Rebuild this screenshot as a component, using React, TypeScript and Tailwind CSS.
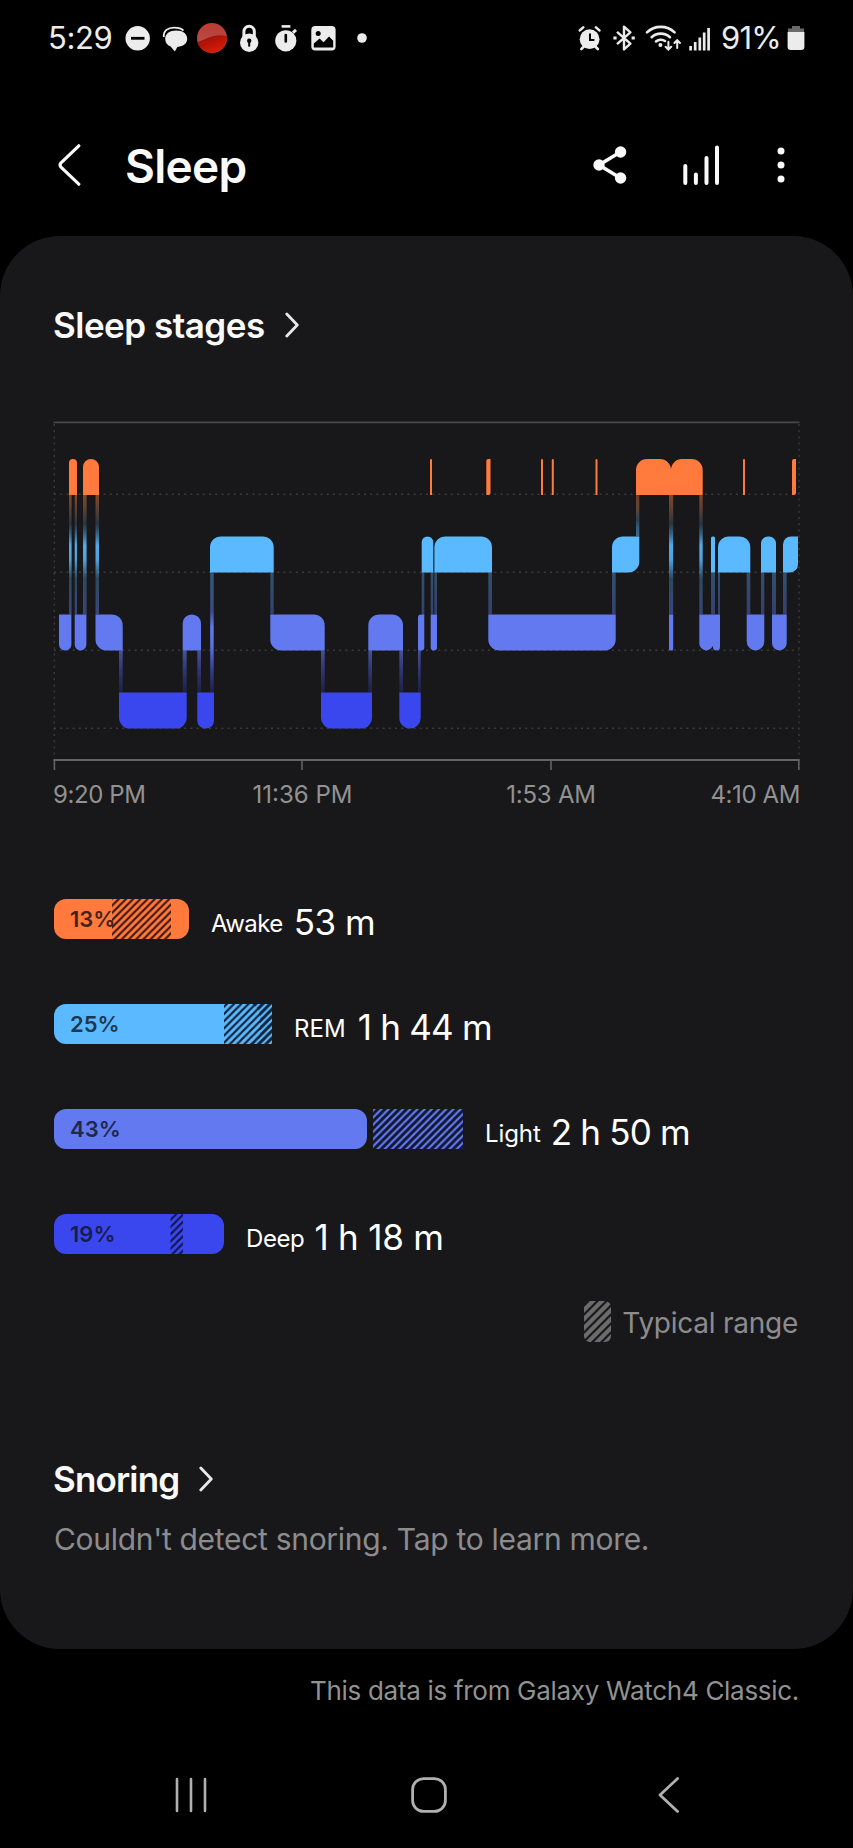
import type { ReactNode } from "react";

type Corners = [number, number, number, number];

interface Segment {
  x0: number;
  x1: number;
  r: Corners; // tl, tr, br, bl
}

const COLORS = {
  awake: "#ff7a3c",
  rem: "#5bb9ff",
  light: "#6379f0",
  deep: "#3a47ee",
};

const SEG_HEIGHT = 36;

const top = (x0: number, x1: number, r: number): Segment => ({ x0, x1, r: [r, r, 0, 0] });
const bottom = (x0: number, x1: number, r: number): Segment => ({ x0, x1, r: [0, 0, r, r] });
const rise = (x0: number, x1: number, r: number): Segment => ({ x0, x1, r: [r, 0, r, 0] });
const fall = (x0: number, x1: number, r: number): Segment => ({ x0, x1, r: [0, r, 0, r] });

const stages: { key: keyof typeof COLORS; y: number; segments: Segment[] }[] = [
  {
    key: "awake",
    y: 459,
    segments: [
      top(69, 77, 4),
      top(83, 99, 8),
      top(430, 432, 1),
      rise(486.3, 490.5, 2),
      top(541, 543, 1),
      top(551.8, 553.8, 1),
      top(595.5, 597.5, 1),
      top(636, 671, 11),
      top(671, 702.7, 11),
      top(743, 745, 1),
      rise(792, 796, 2),
    ],
  },
  {
    key: "rem",
    y: 536.4,
    segments: [
      top(210, 273.7, 11),
      top(421.7, 433.3, 5.8),
      top(434.4, 492, 11),
      rise(612, 639.3, 11),
      top(711, 715, 1.5),
      top(718, 750.3, 11),
      top(761, 776, 7),
      rise(783, 798, 8),
    ],
  },
  {
    key: "light",
    y: 614.4,
    segments: [
      bottom(59, 71.4, 6),
      bottom(74.7, 86.4, 5.8),
      fall(95.5, 122.7, 11),
      top(182.7, 201, 9),
      fall(270.3, 324.7, 11),
      top(368.3, 403, 11),
      rise(418, 424.3, 3),
      bottom(430.7, 437, 3),
      bottom(488.3, 615.7, 11),
      bottom(669, 673.2, 1.5),
      bottom(699.3, 713.3, 7),
      bottom(712.9, 720, 3.5),
      bottom(746.7, 764.3, 8.8),
      bottom(772, 786.7, 7.3),
    ],
  },
  {
    key: "deep",
    y: 692.6,
    segments: [
      bottom(119, 186.7, 11),
      bottom(197.3, 214, 8),
      bottom(321, 372, 11),
      bottom(399.3, 420.7, 10.6),
    ],
  },
];

// vertical links between two stages: [x, width]
const links: { fill: string; y0: number; y1: number; at: [number, number][] }[] = [
  {
    fill: "url(#awake-light)",
    y0: 495,
    y1: 614.4,
    at: [[69, 2.6], [74.7, 2.3], [83, 3.6], [95.5, 3.5], [669, 4.2], [699.3, 3.4]],
  },
  { fill: "url(#awake-rem)", y0: 495, y1: 536.4, at: [[636, 3.3]] },
  {
    fill: "url(#rem-light)",
    y0: 572.4,
    y1: 614.4,
    at: [
      [270.3, 3.4], [421.7, 2.6], [430.7, 2.6], [434.4, 2.6], [488.3, 3.7], [612, 3.7],
      [711, 4], [718, 2], [746.7, 3.6], [761, 3.3], [772, 4], [783, 3.7],
    ],
  },
  { fill: "url(#rem-deep)", y0: 572.4, y1: 692.6, at: [[210.2, 3.5]] },
  {
    fill: "url(#light-deep)",
    y0: 650.4,
    y1: 692.6,
    at: [[119, 3.7], [182.7, 4], [197.3, 3.7], [321, 3.7], [368.3, 3.7], [399.3, 3.7], [418, 2.7]],
  },
];

function segmentPath({ x0, x1, r }: Segment, y: number) {
  const [tl, tr, br, bl] = r;
  const b = y + SEG_HEIGHT;
  return `M${x0 + tl} ${y}H${x1 - tr}A${tr} ${tr} 0 0 1 ${x1} ${y + tr}V${b - br}A${br} ${br} 0 0 1 ${x1 - br} ${b}H${x0 + bl}A${bl} ${bl} 0 0 1 ${x0} ${b - bl}V${y + tl}A${tl} ${tl} 0 0 1 ${x0 + tl} ${y}Z`;
}

function StageChart() {
  return (
    <svg viewBox="54 412 745 366" className="mt-[67px] h-[366px] w-[745px] overflow-visible">
      <defs>
        <linearGradient id="awake-light" x1="0" y1="0" x2="0" y2="1">
          <stop offset="0" stopColor={COLORS.awake} stopOpacity="0.45" />
          <stop offset="0.24" stopColor="#2c4a5c" stopOpacity="0.6" />
          <stop offset="0.42" stopColor={COLORS.rem} stopOpacity="0.9" />
          <stop offset="0.54" stopColor={COLORS.rem} stopOpacity="0.85" />
          <stop offset="0.7" stopColor={COLORS.rem} stopOpacity="0.3" />
          <stop offset="1" stopColor={COLORS.light} stopOpacity="0.45" />
        </linearGradient>
        <linearGradient id="awake-rem" x1="0" y1="0" x2="0" y2="1">
          <stop offset="0" stopColor={COLORS.awake} stopOpacity="0.35" />
          <stop offset="0.6" stopColor="#2c4a5c" stopOpacity="0.8" />
          <stop offset="1" stopColor={COLORS.rem} stopOpacity="0.5" />
        </linearGradient>
        <linearGradient id="rem-light" x1="0" y1="0" x2="0" y2="1">
          <stop offset="0" stopColor={COLORS.rem} stopOpacity="0.35" />
          <stop offset="1" stopColor={COLORS.light} stopOpacity="0.4" />
        </linearGradient>
        <linearGradient id="rem-deep" x1="0" y1="0" x2="0" y2="1">
          <stop offset="0" stopColor={COLORS.rem} stopOpacity="0.4" />
          <stop offset="0.32" stopColor={COLORS.light} stopOpacity="0.5" />
          <stop offset="0.46" stopColor={COLORS.light} />
          <stop offset="0.62" stopColor={COLORS.light} stopOpacity="0.9" />
          <stop offset="1" stopColor={COLORS.deep} stopOpacity="0.2" />
        </linearGradient>
        <linearGradient id="light-deep" x1="0" y1="0" x2="0" y2="1">
          <stop offset="0" stopColor={COLORS.light} stopOpacity="0.6" />
          <stop offset="1" stopColor={COLORS.deep} stopOpacity="0.2" />
        </linearGradient>
      </defs>

      {/* grid */}
      <g stroke="#3b3b3d" strokeWidth="1.4" strokeDasharray="2 4.2" fill="none">
        {[494.3, 572.3, 650.3, 728.3].map((y) => (
          <path key={y} d={`M54 ${y}H799`} />
        ))}
        <path d="M54.3 424V760M799 424V760" />
      </g>
      <path d="M53.5 422.3H799.5" stroke="#464648" strokeWidth="1.8" />
      <path d="M53.5 760H799.5" stroke="#636365" strokeWidth="1.9" />
      <path d="M54.4 760V770M302 760V770M551 760V770M798.8 760V770" stroke="#636365" strokeWidth="1.6" />

      {links.map((l) =>
        l.at.map(([x, w]) => (
          <rect key={`${l.fill}-${x}`} x={x} y={l.y0} width={w} height={l.y1 - l.y0} fill={l.fill} />
        ))
      )}
      {stages.map((s) => (
        <path key={s.key} fill={COLORS[s.key]} d={s.segments.map((seg) => segmentPath(seg, s.y)).join("")} />
      ))}
    </svg>
  );
}

interface StageRow {
  id: string;
  label: string;
  time: string;
  percent: string;
  bar: number;
  range: [number, number];
  color: string;
  dark: string;
  text: string;
  labelClass: string;
  timeClass: string;
}

const rows: StageRow[] = [
  { id: "awake", label: "Awake", time: "53 m", percent: "13%", bar: 135, range: [58, 117], color: "#ff7a3c", dark: "#43190f", text: "text-[#43231a]", labelClass: "tracking-[-0.6px]", timeClass: "ml-[11px] tracking-[-0.5px]" },
  { id: "rem", label: "REM", time: "1 h 44 m", percent: "25%", bar: 206, range: [170, 218], color: "#5bb9ff", dark: "#0f2338", text: "text-[#1d3850]", labelClass: "tracking-[0.1px]", timeClass: "ml-[12px] tracking-[-0.8px]" },
  { id: "light", label: "Light", time: "2 h 50 m", percent: "43%", bar: 313, range: [319, 409], color: "#6379f0", dark: "#10172f", text: "text-[#20294b]", labelClass: "tracking-[-0.1px]", timeClass: "ml-[10px] tracking-[-0.8px]" },
  { id: "deep", label: "Deep", time: "1 h 18 m", percent: "19%", bar: 170, range: [116.5, 129], color: "#3a47ee", dark: "#121650", text: "text-[#181c4e]", labelClass: "tracking-[-0.4px]", timeClass: "ml-[10px] tracking-[-0.2px]" },
];

const HATCH = "M-1.8 1.8L1.8 -1.8M-1.8 9L9 -1.8M5.4 9L9 5.4";

function StageBar({ row }: { row: StageRow }) {
  const [from, to] = row.range;
  const width = Math.max(row.bar, to);
  return (
    <div className="flex h-10 items-center">
      <div className="relative h-10 shrink-0" style={{ width }}>
        <svg className="h-full w-full" viewBox={`0 0 ${width} 40`}>
          <defs>
            <pattern id={`hatch-${row.id}`} width="7.2" height="7.2" patternUnits="userSpaceOnUse">
              <path d={HATCH} stroke={row.dark} strokeWidth="2.1" />
            </pattern>
            {/* inverse hatch for the part of the range past the bar */}
            <pattern id={`range-${row.id}`} width="7.2" height="7.2" patternUnits="userSpaceOnUse">
              <rect width="7.2" height="7.2" fill={row.color} />
              <path d={HATCH} stroke={row.dark} strokeWidth="3" />
            </pattern>
          </defs>
          {to > row.bar && (
            <rect x={from} width={to - from} height="40" fill={`url(#range-${row.id})`} />
          )}
          <rect width={row.bar} height="40" rx="12" fill={row.color} />
          {from < row.bar && (
            <rect x={from} width={Math.min(to, row.bar) - from} height="40" fill={`url(#hatch-${row.id})`} />
          )}
        </svg>
        <span className={`absolute top-0 left-4 text-[22px] leading-10 font-semibold ${row.text}`}>
          {row.percent}
        </span>
      </div>
      <div className="ml-[22px] flex items-baseline whitespace-nowrap text-white">
        <span className={`text-[24px] ${row.labelClass}`}>{row.label}</span>
        <span className={`relative top-[3px] text-[35px] ${row.timeClass}`}>{row.time}</span>
      </div>
    </div>
  );
}

function Chevron() {
  return (
    <svg viewBox="0 0 14 26" className="h-[26px] w-[14px]" fill="none" stroke="#e8e8e8" strokeWidth="2.8" strokeLinecap="round" strokeLinejoin="round">
      <path d="M1.8 2L12.3 13L1.8 24" />
    </svg>
  );
}

function SectionTitle({ children, className = "tracking-[-0.5px]" }: { children: ReactNode; className?: string }) {
  return (
    <div className="-ml-px flex h-10 items-center gap-5">
      <h2 className={`text-[35px] leading-10 font-semibold text-[#fafafa] ${className}`}>{children}</h2>
      <Chevron />
    </div>
  );
}

function StatusBar() {
  return (
    <div className="flex h-[76px] items-center justify-between pr-[48px] pl-[48px] text-[#ececec]">
      <div className="flex items-center">
        <span className="w-[64px] text-[31px] leading-[76px] tracking-[-0.4px]">5:29</span>
        <svg viewBox="0 0 242 32" className="ml-[13px] h-8 w-[242px]" fill="#ececec">
          <defs>
            <linearGradient id="rec-top" x1="0" y1="0" x2="0" y2="1">
              <stop offset="0" stopColor="#c0392f" />
              <stop offset="1" stopColor="#a85a58" />
            </linearGradient>
            <linearGradient id="rec-bottom" x1="0" y1="0" x2="0.6" y2="1">
              <stop offset="0" stopColor="#8d0f08" />
              <stop offset="1" stopColor="#e01a08" />
            </linearGradient>
          </defs>
          {/* do not disturb */}
          <circle cx="12.7" cy="16.3" r="12.2" />
          <path d="M6 16.3H19.5" stroke="#000" strokeWidth="2.8" />
          {/* messages */}
          <path d="M38.8 15C38.3 8.6 43 5.6 49 5.6C53 5.6 56.5 6.4 58.4 8.6" fill="none" stroke="#ececec" strokeWidth="1.8" />
          <path d="M51.2 8.6C58 8.6 62.2 12 62.2 16.8C62.2 21.2 59 24.4 52.4 25L49.8 29.4L45.6 24.4C42 23.1 40.2 20.6 40.2 16.8C40.2 12 44.5 8.6 51.2 8.6Z" />
          {/* recording */}
          <circle cx="87" cy="16" r="15" fill="url(#rec-top)" />
          <path d="M72.5 20C80 18 88 11 101.8 14A15 15 0 0 1 72.5 20Z" fill="url(#rec-bottom)" />
          {/* lock */}
          <path d="M118.9 15V9.4A5.2 5.2 0 0 1 129.3 9.4V15" fill="none" stroke="#ececec" strokeWidth="3" />
          <circle cx="124.2" cy="20.8" r="9.2" />
          <circle cx="124.2" cy="18.8" r="2.2" fill="#000" />
          <path d="M124.2 19V24.6" stroke="#000" strokeWidth="2" />
          {/* timer */}
          <circle cx="160.8" cy="18.8" r="10.6" />
          <path d="M156.6 4.4H165.4" stroke="#ececec" strokeWidth="2.6" />
          <path d="M168 10.6L171 7.8" stroke="#ececec" strokeWidth="3" />
          <path d="M160.8 13V19.4" stroke="#000" strokeWidth="2.6" strokeLinecap="round" />
          {/* picture */}
          <rect x="186.3" y="4" width="24.3" height="24.5" rx="4" />
          <circle cx="193.2" cy="11.6" r="2.5" fill="#000" />
          <path d="M188.8 25.6V21.6L194.6 16.6L198.6 20.2L204 14.4L208.2 18.8V25.6Z" fill="#000" />
          <circle cx="237" cy="16" r="4.8" />
        </svg>
      </div>
      <div className="flex items-center">
        <svg viewBox="0 0 134 32" className="h-8 w-[134px]" fill="#ececec">
          {/* alarm */}
          <circle cx="11.6" cy="17.2" r="9.9" />
          <path d="M1.8 8.4L5.2 5.4M21.4 8.4L18 5.4M5.4 25L3.4 27M17.8 25L19.8 27" stroke="#ececec" strokeWidth="2.6" strokeLinecap="round" />
          <path d="M12 11.4V18H16.4" fill="none" stroke="#000" strokeWidth="2" />
          {/* bluetooth */}
          <path d="M39 9.8L52.4 21.6L46 27.4V4.6L52.4 10.4L39 22.2" fill="none" stroke="#ececec" strokeWidth="2.4" strokeLinejoin="round" />
          <path d="M35.4 16H38.6M53.6 16H56.8" stroke="#ececec" strokeWidth="3.2" />
          {/* wifi */}
          <g fill="none" stroke="#ececec" strokeWidth="2.6" strokeLinecap="round">
            <path d="M69 10.4C76.6 3 89 3 96.6 10.4" />
            <path d="M73.6 15.2C78.8 10.4 86.8 10.4 92 15.2" />
            <path d="M78 19.4C80.6 17.2 84.6 17.2 87 19" />
            <path d="M90.4 19.8V27M87.6 24.8L90.4 27.6L93.2 24.8M99.2 26V18.6M96.4 21L99.2 18.2L102 21" strokeWidth="2" />
          </g>
          <circle cx="82.4" cy="23" r="2" />
          {/* signal */}
          <path d="M112.6 24V28.4M117.2 20V28.4M121.8 15.4V28.4M126.2 10.6V28.4M130.6 6V28.4" stroke="#ececec" strokeWidth="2.7" />
        </svg>
        <span className="ml-[9px] w-[64px] text-[31px] leading-[76px] tracking-[-0.8px] whitespace-nowrap">91%</span>
        <svg viewBox="0 0 18 26" className="ml-[2px] h-[26px] w-[18px]">
          <path d="M5 1H13V3.4H17V8H1V3.4H5Z" fill="#6a6a6a" />
          <path d="M0.6 7H17.4V22A3 3 0 0 1 14.4 25H3.6A3 3 0 0 1 0.6 22Z" fill="#ececec" />
        </svg>
      </div>
    </div>
  );
}

function Header() {
  return (
    <header className="flex h-[160px] items-center pt-[18px] pr-[68px] pl-[58px]">
      <svg viewBox="0 0 24 42" className="h-[42px] w-6" fill="none" stroke="#fafafa" strokeWidth="3.2" strokeLinecap="round" strokeLinejoin="round">
        <path d="M20.8 1.8L3 18.8Q1.2 21 3 23.2L20.8 40.2" />
      </svg>
      <h1 className="mt-[2px] ml-[43px] text-[46px] leading-[60px] font-semibold tracking-[-0.7px] text-[#fafafa]">Sleep</h1>
      <div className="ml-auto flex items-center">
        <svg viewBox="0 0 34 40" className="h-10 w-[34px]" fill="#fafafa">
          <path d="M27.4 7L6 20L27.4 33" fill="none" stroke="#fafafa" strokeWidth="3.6" />
          <circle cx="6" cy="20" r="5.7" />
          <circle cx="27.6" cy="7" r="5.7" />
          <circle cx="27.6" cy="33" r="5.7" />
        </svg>
        <svg viewBox="0 0 38 42" className="ml-[55px] h-[42px] w-[38px]" stroke="#fafafa" strokeWidth="4" strokeLinecap="round">
          <path d="M3.3 22V39M13.9 30.6V39M24.5 14V39M35 3.4V39" />
        </svg>
        <svg viewBox="0 0 8 36" className="ml-[57px] h-9 w-2" fill="#fafafa">
          <circle cx="4" cy="4" r="3.5" />
          <circle cx="4" cy="18" r="3.5" />
          <circle cx="4" cy="32" r="3.5" />
        </svg>
      </div>
    </header>
  );
}

export default function App() {
  return (
    <div className="flex h-[1848px] w-[853px] flex-col overflow-hidden bg-black font-[Inter,Roboto,sans-serif]">
      <StatusBar />
      <Header />

      <main className="flex h-[1413px] flex-col rounded-[60px] bg-[#18181a] px-[54px] pt-[69px]">
        <SectionTitle>Sleep stages</SectionTitle>
        <StageChart />
        <div className="mt-px grid grid-cols-[124px_249px_248px_124px] text-[24px] leading-8 whitespace-nowrap text-[#929292]">
          <span className="-ml-px tracking-[-0.4px]">9:20 PM</span>
          <span className="text-center">11:36 PM</span>
          <span className="text-center tracking-[-0.2px]">1:53 AM</span>
          <span className="-mr-px text-right tracking-[-0.4px]">4:10 AM</span>
        </div>

        <div className="mt-[88px] flex flex-col gap-[65px]">
          {rows.map((row) => (
            <StageBar key={row.id} row={row} />
          ))}
        </div>

        <div className="mt-[47px] mr-px flex h-[41px] items-center justify-end gap-[11px]">
          <svg viewBox="0 0 27 41" className="h-[41px] w-[27px]">
            <defs>
              <pattern id="hatch-legend" width="9" height="9" patternUnits="userSpaceOnUse">
                <path d="M-2 2L2 -2M-2 11L11 -2M7 11L11 7" stroke="#6b6b6b" strokeWidth="4.2" />
              </pattern>
            </defs>
            <rect width="27" height="41" rx="6" fill="url(#hatch-legend)" />
          </svg>
          <span className="mt-[2px] text-[28px] tracking-[-0.25px] text-[#8c8c8e]">Typical range</span>
        </div>

        <div className="mt-[117px]">
          <SectionTitle className="tracking-[-0.85px]">Snoring</SectionTitle>
          <p className="mt-[20px] text-[30px] leading-10 tracking-[-0.3px] whitespace-nowrap text-[#8c8c8e]">
            Couldn't detect snoring. Tap to learn more.
          </p>
        </div>
      </main>

      <p className="mt-[22px] pr-[54px] text-right text-[26px] leading-10 tracking-[-0.3px] text-[#929292]">
        This data is from Galaxy Watch4 Classic.
      </p>

      <nav className="mt-[64px] flex h-10 items-center pl-[175px]">
        <svg viewBox="0 0 32 36" className="h-9 w-8" stroke="#b0b0b0" strokeWidth="2.6" strokeLinecap="round">
          <path d="M2 2V34M16 2V34M30 2V34" />
        </svg>
        <svg viewBox="0 0 36 36" className="ml-[204px] h-9 w-9" fill="none" stroke="#b0b0b0" strokeWidth="2.8">
          <rect x="1.6" y="1.6" width="32.8" height="32.8" rx="11" />
        </svg>
        <svg viewBox="0 0 22 36" className="ml-[211px] h-9 w-[22px]" fill="none" stroke="#b0b0b0" strokeWidth="2.8" strokeLinecap="round" strokeLinejoin="round">
          <path d="M19.6 1.6L2 18L19.6 34.4" />
        </svg>
      </nav>
    </div>
  );
}
